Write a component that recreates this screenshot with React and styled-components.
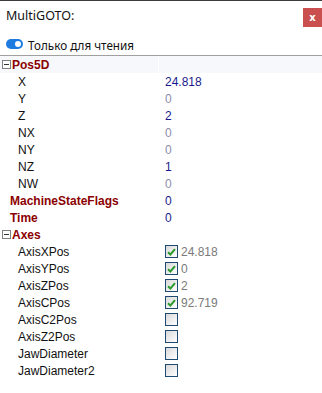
import React from "react";
import styled, { createGlobalStyle } from "styled-components";

const Global = createGlobalStyle`
  html, body { margin: 0; padding: 0; background: #fff; }
  body { font-family: "Noto Sans", "Liberation Sans", sans-serif; }
`;

const Panel = styled.div`
  width: 322px;
  height: 393px;
  border-top: 1px solid #3a3a3a;
  box-sizing: border-box;
  overflow: hidden;
  background: #fff;
`;

const TitleBar = styled.div`
  height: 34px;
  display: flex;
  justify-content: space-between;
  align-items: flex-start;
`;

const Title = styled.div`
  margin: 6px 0 0 6px;
  font-size: 12.5px;
  line-height: 18px;
  color: #111;
`;

const Close = styled.div`
  margin-top: 7px;
  width: 19px;
  height: 19px;
  background: #c9504f;
  color: #fff;
  font-family: "DejaVu Sans", sans-serif;
  font-weight: bold;
  font-size: 10px;
  display: flex;
  align-items: center;
  justify-content: center;
`;

const ToggleRow = styled.div`
  height: 19px;
  display: flex;
  align-items: center;
  gap: 5px;
  padding-left: 6px;
  font-size: 11.7px;
  color: #111;
`;

const Switch = styled.span`
  width: 17px;
  height: 10px;
  border-radius: 5px;
  background: #1e7be0;
  position: relative;
  margin-top: -1px;
  &::after {
    content: "";
    position: absolute;
    right: 2px;
    top: 2px;
    width: 6px;
    height: 6px;
    border-radius: 50%;
    background: #fff;
  }
`;

const Separator = styled.div`
  height: 1px;
  background: #a0a0a0;
  margin-top: 1px;
`;

const Grid = styled.div`
  font-family: "Liberation Sans", Arial, sans-serif;
  font-size: 12px;
`;

const Row = styled.div`
  display: grid;
  grid-template-columns: 158px 1fr;
  height: 17px;
  align-items: stretch;
`;

const NameCell = styled.div`
  display: flex;
  align-items: center;
  padding-left: ${(p) => p.$indent}px;
  background: ${(p) => (p.$shade ? "#f7f8fc" : "transparent")};
  color: ${(p) => (p.$cat ? "#8b0000" : "#111")};
  font-weight: ${(p) => (p.$cat ? "bold" : "normal")};
  white-space: nowrap;
`;

const ValueCell = styled.div`
  display: flex;
  align-items: center;
  gap: 3px;
  padding-left: 7px;
  margin-left: ${(p) => (p.$shade ? "1px" : "0")};
  background: ${(p) => (p.$shade ? "#f7f8fc" : "transparent")};
  color: ${(p) => p.$color};
`;

const Expander = styled.span`
  width: 7px;
  height: 7px;
  border: 1px solid #808080;
  background: #fff;
  margin-right: 1px;
  position: relative;
  box-sizing: content-box;
  &::after {
    content: "";
    position: absolute;
    left: 1px;
    right: 1px;
    top: 3px;
    height: 1px;
    background: #333;
  }
`;

const Box = styled.span`
  width: 11px;
  height: 11px;
  border: 1px solid #1f4a72;
  background: linear-gradient(135deg, #d9d9d9, #ffffff);
  display: flex;
  align-items: center;
  justify-content: center;
`;

const CheckText = styled.span`
  color: #7a7a7a;
`;

const Check = ({ checked }) => (
  <Box>
    {checked && (
      <svg width="9" height="8" viewBox="0 0 9 8">
        <path d="M1 4.2 L3.4 6.5 L8 1.2" stroke="#2c9a2c" strokeWidth="2" fill="none" />
      </svg>
    )}
  </Box>
);

const rows = [
  { name: "Pos5D", cat: true, exp: true, shade: true },
  { name: "X", value: "24.818" },
  { name: "Y", value: "0" },
  { name: "Z", value: "2" },
  { name: "NX", value: "0" },
  { name: "NY", value: "0" },
  { name: "NZ", value: "1" },
  { name: "NW", value: "0" },
  { name: "MachineStateFlags", cat: true, value: "0", top: true },
  { name: "Time", cat: true, value: "0", top: true },
  { name: "Axes", cat: true, exp: true },
  { name: "AxisXPos", check: true, value: "24.818" },
  { name: "AxisYPos", check: true, value: "0" },
  { name: "AxisZPos", check: true, value: "2" },
  { name: "AxisCPos", check: true, value: "92.719" },
  { name: "AxisC2Pos", check: false },
  { name: "AxisZ2Pos", check: false },
  { name: "JawDiameter", check: false },
  { name: "JawDiameter2", check: false },
];

const valueColor = (r) => {
  if (r.top) return "#1a1a8c";
  return r.value === "0" ? "#8c8cab" : "#1a1a8c";
};

export default function App() {
  return (
    <>
      <Global />
      <Panel>
        <TitleBar>
          <Title>MultiGOTO:</Title>
          <Close>x</Close>
        </TitleBar>
        <ToggleRow>
          <Switch />
          Только для чтения
        </ToggleRow>
        <Separator />
        <Grid>
          {rows.map((r) => (
            <Row key={r.name}>
              <NameCell $cat={r.cat} $shade={r.shade} $indent={r.exp ? 2 : r.cat ? 10 : 18}>
                {r.exp && <Expander />}
                {r.name}
              </NameCell>
              <ValueCell $shade={r.shade} $color={valueColor(r)}>
                {r.check !== undefined ? (
                  <>
                    <Check checked={r.check} />
                    {r.value && <CheckText>{r.value}</CheckText>}
                  </>
                ) : (
                  r.value
                )}
              </ValueCell>
            </Row>
          ))}
        </Grid>
      </Panel>
    </>
  );
}
